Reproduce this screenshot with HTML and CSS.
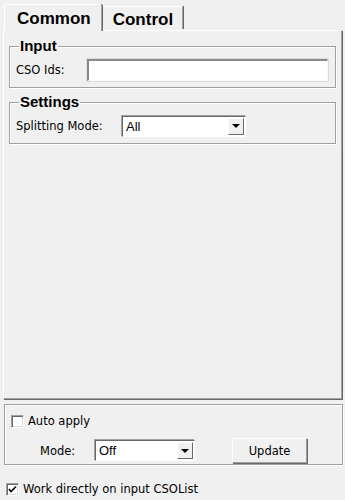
FILE: index.html
```html
<!DOCTYPE html>
<html lang="en">
<head>
  <meta charset="UTF-8">
  <title>CSO Splitter</title>
  <link rel="stylesheet" href="styles.css">
</head>
<body>
  <div class="tabs">
    <div class="tab active">Common</div>
    <div class="tab">Control</div>
  </div>
  <div class="pane">
    <fieldset class="group">
      <legend>Input</legend>
      <div class="row">
        <label class="lbl lbl-ids">CSO Ids:</label>
        <input type="text" class="field">
      </div>
    </fieldset>
    <fieldset class="group">
      <legend>Settings</legend>
      <div class="row">
        <label class="lbl lbl-split">Splitting Mode:</label>
        <div class="combo combo-split">
          <span class="combo-text">All</span>
          <span class="combo-btn"><span class="arrow"></span></span>
        </div>
      </div>
    </fieldset>
  </div>

  <div class="bottom">
    <div class="check-row">
      <span class="check"></span>
      <span>Auto apply</span>
    </div>
    <div class="mode-row">
      <span class="lbl lbl-mode">Mode:</span>
      <div class="combo combo-mode">
        <span class="combo-text">Off</span>
        <span class="combo-btn"><span class="arrow"></span></span>
      </div>
      <button class="btn">Update</button>
    </div>
  </div>

  <div class="check-row work">
    <span class="check checked">
      <svg width="9" height="9" viewBox="0 0 9 9"><path d="M1 4 L3 6.5 L8 1.5" fill="none" stroke="#000" stroke-width="1.6"/></svg>
    </span>
    <span>Work directly on input CSOList</span>
  </div>
</body>
</html>
```

FILE: styles.css
```css
* {
  margin: 0;
  padding: 0;
  box-sizing: border-box;
}

body {
  background-color: #f0f0f0;
  font-family: Tahoma, "DejaVu Sans", "Liberation Sans", sans-serif;
  font-size: 11.5px;
  color: #000;
  width: 345px;
  height: 500px;
  overflow: hidden;
}

/* tab bar */
.tabs {
  display: flex;
  align-items: flex-end;
  padding: 4px 0 0 4px;
  height: 30px;
}

.tab {
  font-family: "Liberation Sans", Arial, sans-serif;
  font-weight: bold;
  font-size: 17px;
  padding: 2px 9px 0 10px;
  height: 23px;
  line-height: 22px;
  border-top: 1px solid #fff;
  border-left: 1px solid #fff;
  border-right: 1px solid #a0a0a0;
  box-shadow: 1px 0 0 #696969;
  margin-bottom: 1px;
}

.tab.active {
  height: 27px;
  margin-bottom: -1px;
  padding: 2px 10px 0 12px;
  line-height: 24px;
  background-color: #f0f0f0;
  position: relative;
  z-index: 1;
  border-radius: 2px 2px 0 0;
}

.pane {
  margin-left: 3px;
  width: 339px;
  height: 369px;
  border-top: 1px solid #fff;
  border-left: 1px solid #fff;
  border-right: 1px solid #a0a0a0;
  border-bottom: 1px solid #a0a0a0;
  box-shadow: 1px 1px 0 #696969;
  padding: 7px 5px 0 5px;
}

/* group boxes */
.group {
  border: 1px solid #a0a0a0;
  box-shadow: inset 1px 1px 0 #fff, 1px 1px 0 #fff;
  padding: 3px 6px 0 6px;
  margin-bottom: 6px;
}

.group legend {
  font-family: "Liberation Sans", Arial, sans-serif;
  font-weight: bold;
  font-size: 15px;
  padding: 0 1px;
  margin-left: 3px;
  line-height: 16px;
}

.row {
  display: flex;
  align-items: center;
  height: 26px;
  margin-bottom: 4px;
}

.lbl {
  font-family: Tahoma, "DejaVu Sans", sans-serif;
  font-size: 11.5px;
}

.lbl-ids {
  width: 71px;
}

.lbl-split {
  width: 106px;
}

.field {
  flex: 1;
  height: 22px;
  background: #fff;
  border-top: 2px solid #8a8a8a;
  border-left: 2px solid #8a8a8a;
  border-right: 1px solid #f8f8f8;
  border-bottom: 1px solid #f8f8f8;
  outline: 1px solid #dcdcdc;
  margin-right: 1px;
}

/* combo boxes */
.combo {
  display: flex;
  align-items: center;
  height: 21px;
  background: #fff;
  border-top: 1px solid #696969;
  border-left: 1px solid #696969;
  border-right: 1px solid #fff;
  border-bottom: 1px solid #fff;
  box-shadow: -1px -1px 0 #a0a0a0;
  padding: 1px;
}

.combo-text {
  flex: 1;
  font-family: "Liberation Sans", Arial, sans-serif;
  font-size: 13px;
  padding-left: 2px;
}

.combo-btn {
  width: 16px;
  height: 17px;
  background: #f0f0f0;
  border-top: 1px solid #fff;
  border-left: 1px solid #fff;
  border-right: 1px solid #696969;
  border-bottom: 1px solid #696969;
  display: flex;
  align-items: center;
  justify-content: center;
}

.arrow {
  width: 0;
  height: 0;
  border-left: 4px solid transparent;
  border-right: 4px solid transparent;
  border-top: 4px solid #000;
}

.combo-split {
  width: 124px;
}

.combo-mode {
  width: 100px;
}

/* bottom options */
.bottom {
  margin: 5px 2px 0 4px;
  height: 61px;
  border: 1px solid #a0a0a0;
  box-shadow: inset 1px 1px 0 #fff, 1px 1px 0 #fff;
  padding: 9px 6px 0 6px;
}

.check-row {
  display: flex;
  align-items: center;
  gap: 4px;
  height: 14px;
}

.check {
  width: 13px;
  height: 13px;
  background: #fff;
  border-top: 1px solid #a0a0a0;
  border-left: 1px solid #a0a0a0;
  border-right: 1px solid #fff;
  border-bottom: 1px solid #fff;
  box-shadow: inset 1px 1px 0 #696969, inset -1px -1px 0 #dcdcdc;
  display: flex;
  align-items: center;
  justify-content: center;
}

.mode-row {
  display: flex;
  align-items: center;
  margin-top: 10px;
}

.lbl-mode {
  margin-left: 29px;
  width: 55px;
}

.btn {
  margin-left: 37px;
  width: 75px;
  height: 25px;
  font-family: Tahoma, "DejaVu Sans", sans-serif;
  font-size: 11.5px;
  background: #f0f0f0;
  border-top: 1px solid #fff;
  border-left: 1px solid #fff;
  border-right: 1px solid #a0a0a0;
  border-bottom: 1px solid #a0a0a0;
  box-shadow: 1px 1px 0 #696969;
}

.work {
  margin: 17px 0 0 6px;
}
```
